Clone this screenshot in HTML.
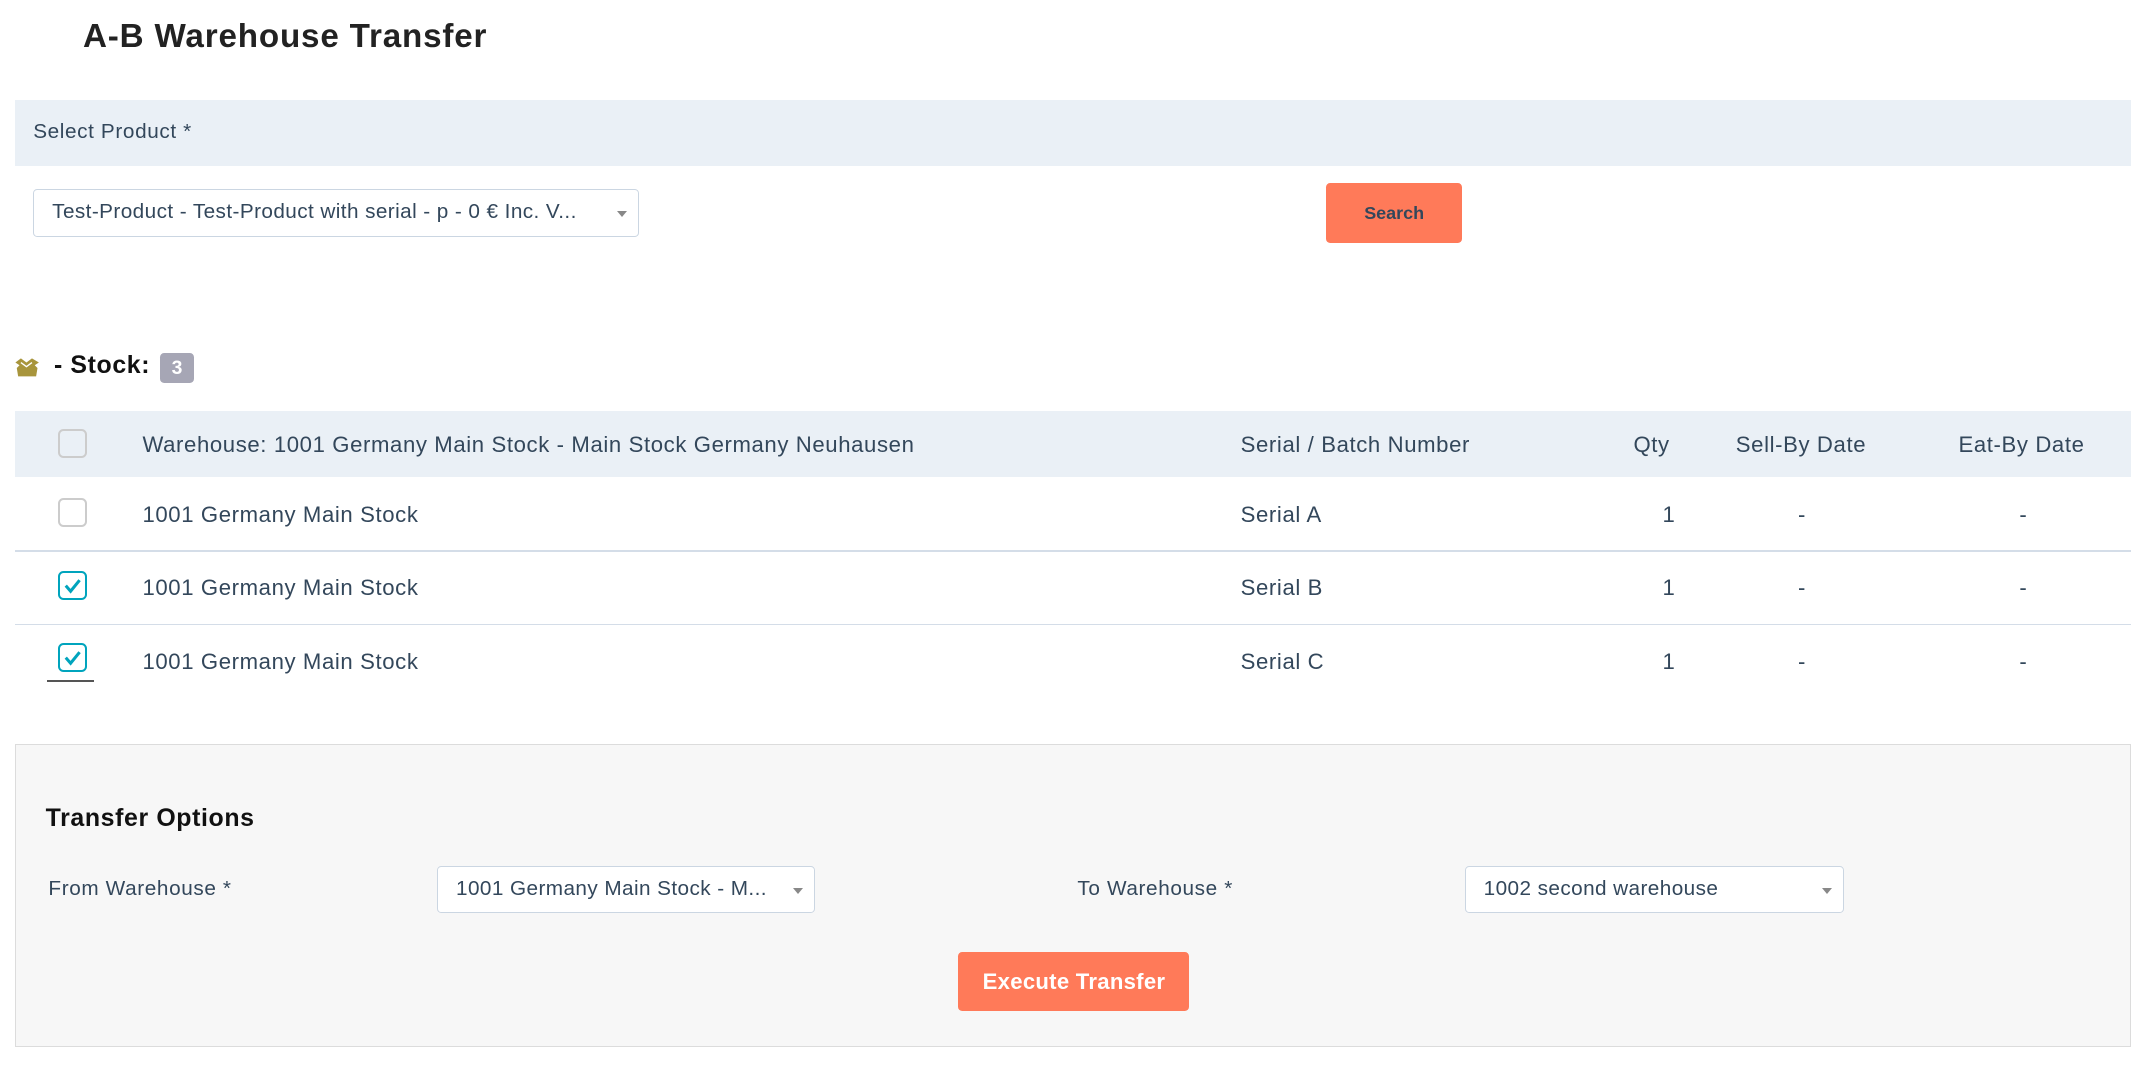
<!DOCTYPE html>
<html><head><meta charset="utf-8"><style>
html,body{margin:0;padding:0;background:#fff;}
body{width:1553px;height:771px;zoom:1.3831;position:relative;overflow:hidden;font-family:"Liberation Sans",sans-serif;color:#33475b;font-size:16px;letter-spacing:0.45px;}
.a{position:absolute;white-space:nowrap;}
.band{position:absolute;left:11px;width:1530px;background:#eaf0f6;}
.sel{position:absolute;height:34px;border:1px solid #cbd6e2;border-radius:3px;background:#fff;box-sizing:border-box;line-height:32px;padding-left:13px;font-size:15px;letter-spacing:0.3px;overflow:hidden;white-space:nowrap;}
.sel:after{content:"";position:absolute;right:8px;top:15px;border-left:4px solid transparent;border-right:4px solid transparent;border-top:5px solid #888;}
.cb{position:absolute;width:18px;height:18px;border:2px solid #ccc;border-radius:4px;box-sizing:content-box;}
.cb.on{border-color:#00a4bd;}
.cb.on svg{position:absolute;left:2px;top:2px;}
.hr{position:absolute;left:11px;width:1530px;height:1px;background:#d4dde8;}
.btn{position:absolute;background:#ff7a59;border-radius:3px;text-align:center;font-weight:bold;}
</style></head><body>
<div class="a" style="left:60px;top:13px;font-size:24px;font-weight:bold;color:#222;letter-spacing:0.6px;">A-B Warehouse Transfer</div>
<div class="band" style="top:72px;height:48px;"></div>
<div class="a" style="left:24px;top:87px;font-size:15px;">Select Product *</div>
<div class="sel" style="left:24px;top:137px;width:438px;padding-right:24px;">Test-Product - Test-Product with serial - p - 0 € Inc. V...</div>
<div class="btn" style="left:959px;top:132px;width:98px;height:44px;line-height:44px;font-size:13px;color:#33475b;letter-spacing:0;">Search</div>

<svg class="a" style="left:10px;top:258px" width="19" height="15" viewBox="0 0 19 15"><path d="M1 4 L5 1 L9 4 L13 1 L18 4 L15 6 L17 8 L16 14 L3 14 L2 8 L4 6Z" fill="#a8953c"/><path d="M5 4 L9 7 L13 4" stroke="#fff" stroke-width="1" fill="none"/></svg>
<div class="a" style="left:39px;top:254px;font-size:18px;font-weight:bold;color:#111;">- Stock:</div>
<div class="a" style="left:116px;top:255px;width:24px;height:22px;background:#a6a6b5;border-radius:3px;color:#fff;font-weight:bold;font-size:14px;text-align:center;line-height:22px;letter-spacing:0;">3</div>

<div class="band" style="top:297px;height:48px;"></div>
<div class="cb" style="left:42px;top:310px;"></div>
<div class="a" style="left:103px;top:312px;">Warehouse: 1001 Germany Main Stock - Main Stock Germany Neuhausen</div>
<div class="a" style="left:897px;top:312px;">Serial / Batch Number</div>
<div class="a" style="left:1181px;top:312px;">Qty</div>
<div class="a" style="left:1255px;top:312px;">Sell-By Date</div>
<div class="a" style="left:1416px;top:312px;">Eat-By Date</div>

<div class="cb" style="left:42px;top:360px;"></div>
<div class="a" style="left:103px;top:363px;">1001 Germany Main Stock</div>
<div class="a" style="left:897px;top:363px;">Serial A</div>
<div class="a" style="left:1202px;top:363px;">1</div>
<div class="a" style="left:1300px;top:363px;">-</div>
<div class="a" style="left:1460px;top:363px;">-</div>
<div class="hr" style="top:398px;"></div>

<div class="cb on" style="left:42px;top:413px;"><svg width="14" height="14" viewBox="0 0 14 14"><path d="M2 7 L5.5 11 L12 3" stroke="#00a4bd" stroke-width="2.2" fill="none"/></svg></div>
<div class="a" style="left:103px;top:416px;">1001 Germany Main Stock</div>
<div class="a" style="left:897px;top:416px;">Serial B</div>
<div class="a" style="left:1202px;top:416px;">1</div>
<div class="a" style="left:1300px;top:416px;">-</div>
<div class="a" style="left:1460px;top:416px;">-</div>
<div class="hr" style="top:451px;"></div>

<div class="cb on" style="left:42px;top:465px;"><svg width="14" height="14" viewBox="0 0 14 14"><path d="M2 7 L5.5 11 L12 3" stroke="#00a4bd" stroke-width="2.2" fill="none"/></svg></div>
<div class="a" style="left:34px;top:492px;width:34px;height:1px;background:#555;"></div>
<div class="a" style="left:103px;top:469px;">1001 Germany Main Stock</div>
<div class="a" style="left:897px;top:469px;">Serial C</div>
<div class="a" style="left:1202px;top:469px;">1</div>
<div class="a" style="left:1300px;top:469px;">-</div>
<div class="a" style="left:1460px;top:469px;">-</div>

<div class="a" style="left:11px;top:538px;width:1530px;height:219px;background:#f7f7f7;border:1px solid #dcdcdc;box-sizing:border-box;"></div>
<div class="a" style="left:33px;top:581px;font-size:18px;font-weight:bold;color:#111;">Transfer Options</div>
<div class="a" style="left:35px;top:634px;font-size:15px;">From Warehouse *</div>
<div class="sel" style="left:316px;top:626px;width:273px;">1001 Germany Main Stock - M...</div>
<div class="a" style="left:779px;top:634px;font-size:15px;">To Warehouse *</div>
<div class="sel" style="left:1059px;top:626px;width:274px;">1002 second warehouse</div>
<div class="btn" style="left:693px;top:688px;width:167px;height:43px;line-height:43px;font-size:16px;color:#fff;letter-spacing:0.2px;">Execute Transfer</div>
</body></html>
